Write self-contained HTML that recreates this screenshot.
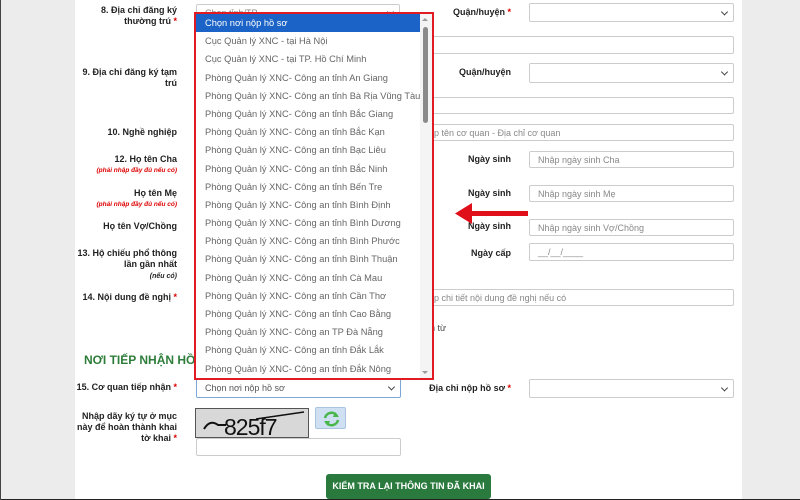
<!DOCTYPE html>
<html><head><meta charset="utf-8"><style>
*{box-sizing:border-box;margin:0;padding:0}
body{width:800px;height:500px;overflow:hidden;background:#ececec;font-family:"Liberation Sans",sans-serif;position:relative;font-size:9px;color:#222}
.panel{position:absolute;left:75px;top:0;width:667px;height:500px;background:#fff}
.lbl{position:absolute;right:623px;text-align:right;font-weight:bold;font-size:9px;line-height:11px;color:#222}
.rl{position:absolute;text-align:right;font-weight:bold;font-size:9px;width:120px;color:#222}
.note{color:#d00;font-style:italic;font-weight:bold;font-size:6.5px;display:block}
.star{color:#d00}
.in{position:absolute;background:#fff;border:1px solid #ccc;border-radius:2px;font-size:9px;color:#888;padding-left:8px;display:flex;align-items:center}
.sel::after{content:"";position:absolute;right:6px;top:50%;width:4px;height:4px;border-right:1.5px solid #444;border-bottom:1.5px solid #444;transform:translateY(-70%) rotate(45deg)}
.dd{position:absolute;left:194px;top:12px;width:240px;height:368px;border:2px solid #e01b24;background:#fff;overflow:hidden}
.dd div.it{height:18.2px;line-height:18.2px;padding-left:9px;font-size:9.3px;color:#666;white-space:nowrap}
.dd div.hl{background:#1b63c6;color:#fff;width:224px}
</style></head><body>
<div class="panel"></div>
<div style="position:absolute;left:0;top:499px;width:800px;height:1px;background:#222"></div>
<div style="position:absolute;left:0;top:0;width:1px;height:500px;background:#444"></div>

<div class="lbl" style="top:5px">8. Địa chỉ đăng ký<br>thường trú <span class="star">*</span></div>
<div class="in sel" style="left:196px;top:4px;width:204px;height:18px">Chọn tỉnh/TP</div>
<div class="rl" style="left:391px;top:7px">Quận/huyện <span class="star">*</span></div>
<div class="in sel" style="left:529px;top:3px;width:205px;height:19px"></div>
<div class="in" style="left:196px;top:36px;width:538px;height:18px"></div>

<div class="lbl" style="top:67px">9. Địa chỉ đăng ký tạm<br>trú</div>
<div class="rl" style="left:391px;top:67px">Quận/huyện</div>
<div class="in sel" style="left:529px;top:63px;width:205px;height:20px"></div>
<div class="in" style="left:196px;top:97px;width:538px;height:17px"></div>

<div class="lbl" style="top:127px">10. Nghề nghiệp</div>
<div class="in" style="left:196px;top:124px;width:538px;height:17px;padding-left:232px">ập tên cơ quan - Địa chỉ cơ quan</div>

<div class="lbl" style="top:154px">12. Họ tên Cha<span class="note">(phải nhập đầy đủ nếu có)</span></div>
<div class="rl" style="left:391px;top:154px">Ngày sinh</div>
<div class="in" style="left:529px;top:151px;width:205px;height:17px">Nhập ngày sinh Cha</div>

<div class="lbl" style="top:188px">Họ tên Mẹ<span class="note">(phải nhập đầy đủ nếu có)</span></div>
<div class="rl" style="left:391px;top:188px">Ngày sinh</div>
<div class="in" style="left:529px;top:185px;width:205px;height:17px">Nhập ngày sinh Mẹ</div>

<div class="lbl" style="top:221px">Họ tên Vợ/Chồng</div>
<div class="rl" style="left:391px;top:221px">Ngày sinh</div>
<div class="in" style="left:529px;top:219px;width:205px;height:17px">Nhập ngày sinh Vợ/Chồng</div>

<div class="lbl" style="top:248px">13. Hộ chiếu phổ thông<br>lần gần nhất<br><i style="font-size:7px">(nếu có)</i></div>
<div class="rl" style="left:391px;top:248px">Ngày cấp</div>
<div class="in" style="left:529px;top:243px;width:205px;height:18px">__/__/____</div>

<div class="lbl" style="top:292px">14. Nội dung đề nghị <span class="star">*</span></div>
<div class="in" style="left:196px;top:289px;width:538px;height:17px;padding-left:232px">ập chi tiết nội dung đề nghị nếu có</div>
<div style="position:absolute;left:430px;top:323px;font-size:9px;color:#444">n từ</div>

<div style="position:absolute;left:84px;top:353px;font-weight:bold;font-size:12px;color:#2e7d3a">NƠI TIẾP NHẬN HỒ SƠ</div>

<div class="lbl" style="top:382px">15. Cơ quan tiếp nhận <span class="star">*</span></div>
<div class="in sel" style="left:196px;top:378px;width:205px;height:20px;border-color:#7aa7d8;color:#555">Chọn nơi nộp hồ sơ</div>
<div class="rl" style="left:391px;top:383px">Địa chỉ nộp hồ sơ <span class="star">*</span></div>
<div class="in sel" style="left:529px;top:379px;width:205px;height:19px"></div>

<div class="lbl" style="top:411px">Nhập dãy ký tự ở mục<br>này để hoàn thành khai<br>tờ khai <span class="star">*</span></div>
<div style="position:absolute;left:195px;top:408px;width:114px;height:30px;background:#d8d8d8;border:1px solid #555;overflow:hidden">
<svg width="114" height="30"><path d="M8 20 Q14 10 22 16 L30 16" stroke="#111" stroke-width="2" fill="none"/><path d="M60 10 L108 3" stroke="#111" stroke-width="1.5"/><text x="28" y="26" font-family="Liberation Sans,sans-serif" font-size="23" fill="#111" letter-spacing="-1">825f7</text></svg></div>
<div style="position:absolute;left:315px;top:407px;width:31px;height:22px;background:#cfe0f2;border:1px solid #aac4e0;border-radius:2px">
<svg width="31" height="22" viewBox="0 0 31 22"><path d="M9 10 A6.5 6.5 0 0 1 21 8" stroke="#49b649" stroke-width="2.5" fill="none"/><path d="M22 12 A6.5 6.5 0 0 1 10 14" stroke="#49b649" stroke-width="2.5" fill="none"/><path d="M19 4 L23 9 L17 9Z" fill="#49b649"/><path d="M12 18 L8 13 L14 13Z" fill="#49b649"/></svg></div>
<div class="in" style="left:196px;top:438px;width:205px;height:18px"></div>

<div style="position:absolute;left:326px;top:474px;width:165px;height:25px;background:#2a7a3e;border-radius:3px;color:#fff;font-weight:bold;font-size:9px;text-align:center;line-height:25px">KIỂM TRA LẠI THÔNG TIN ĐÃ KHAI</div>

<div class="dd">
<div class="it hl">Chọn nơi nộp hồ sơ</div>
<div class="it">Cục Quản lý XNC - tại Hà Nội</div>
<div class="it">Cục Quản lý XNC - tại TP. Hồ Chí Minh</div>
<div class="it">Phòng Quản lý XNC- Công an tỉnh An Giang</div>
<div class="it">Phòng Quản lý XNC- Công an tỉnh Bà Rịa Vũng Tàu</div>
<div class="it">Phòng Quản lý XNC- Công an tỉnh Bắc Giang</div>
<div class="it">Phòng Quản lý XNC- Công an tỉnh Bắc Kạn</div>
<div class="it">Phòng Quản lý XNC- Công an tỉnh Bạc Liêu</div>
<div class="it">Phòng Quản lý XNC- Công an tỉnh Bắc Ninh</div>
<div class="it">Phòng Quản lý XNC- Công an tỉnh Bến Tre</div>
<div class="it">Phòng Quản lý XNC- Công an tỉnh Bình Định</div>
<div class="it">Phòng Quản lý XNC- Công an tỉnh Bình Dương</div>
<div class="it">Phòng Quản lý XNC- Công an tỉnh Bình Phước</div>
<div class="it">Phòng Quản lý XNC- Công an tỉnh Bình Thuận</div>
<div class="it">Phòng Quản lý XNC- Công an tỉnh Cà Mau</div>
<div class="it">Phòng Quản lý XNC- Công an tỉnh Cần Thơ</div>
<div class="it">Phòng Quản lý XNC- Công an tỉnh Cao Bằng</div>
<div class="it">Phòng Quản lý XNC- Công an TP Đà Nẵng</div>
<div class="it">Phòng Quản lý XNC- Công an tỉnh Đắk Lắk</div>
<div class="it">Phòng Quản lý XNC- Công an tỉnh Đắk Nông</div>
<div style="position:absolute;right:0;top:0;width:12px;height:364px;background:#f4f4f4"></div>
<div style="position:absolute;right:4px;top:13px;width:5px;height:96px;background:#8a8a8a;border-radius:3px"></div>
<div style="position:absolute;right:4px;top:4px;width:0;height:0;border:3px solid transparent;border-bottom-color:#999;border-top:0"></div>
<div style="position:absolute;right:4px;bottom:4px;width:0;height:0;border:3px solid transparent;border-top-color:#999;border-bottom:0"></div>
</div>

<svg style="position:absolute;left:450px;top:200px" width="82" height="28"><rect x="18" y="11" width="60" height="5" fill="#e0101a"/><path d="M5 13.5 L22 3 L22 24Z" fill="#e0101a"/></svg>
</body></html>
